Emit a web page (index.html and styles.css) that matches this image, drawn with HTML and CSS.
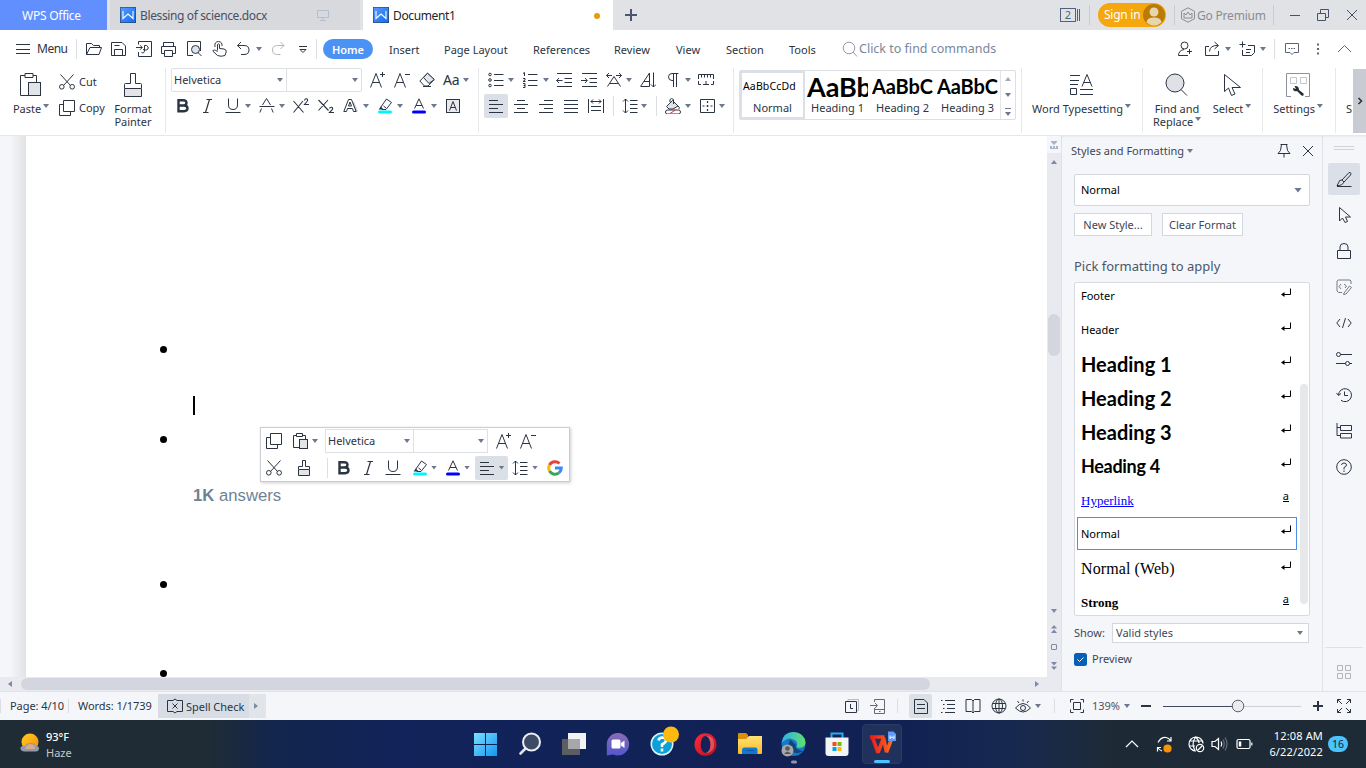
FILE: index.html
```html
<!DOCTYPE html>
<html lang="en">
<head>
<meta charset="utf-8">
<title>Document1 - WPS Office</title>
<link rel="stylesheet" href="styles.css">
</head>
<body>
<svg class="defs" aria-hidden="true">
<defs>
<linearGradient id="gw" x1="0" y1="0" x2="1" y2="1"><stop offset="0" stop-color="#5a9bff"/><stop offset="1" stop-color="#0f6df0"/></linearGradient>
<linearGradient id="gwin" x1="0" y1="0" x2="1" y2="1"><stop offset="0" stop-color="#7be0fb"/><stop offset="1" stop-color="#1297f3"/></linearGradient>
<linearGradient id="gsun" x1="0" y1="0" x2="1" y2="1"><stop offset="0" stop-color="#ffd21c"/><stop offset="1" stop-color="#f58a0c"/></linearGradient>
<linearGradient id="gchat" x1="0" y1="0" x2="0" y2="1"><stop offset="0" stop-color="#8a6bb5"/><stop offset="1" stop-color="#5257cf"/></linearGradient>
<linearGradient id="gop" x1="0" y1="0" x2="1" y2="1"><stop offset="0" stop-color="#ff2b3c"/><stop offset="1" stop-color="#b8101f"/></linearGradient>
<linearGradient id="gfold" x1="0" y1="0" x2="0" y2="1"><stop offset="0" stop-color="#ffe07a"/><stop offset="1" stop-color="#fbbd1e"/></linearGradient>
<linearGradient id="gedge" x1="0" y1="0" x2="1" y2="0"><stop offset="0" stop-color="#2fb0ec"/><stop offset="1" stop-color="#5fe06a"/></linearGradient>
<linearGradient id="gwps" x1="0" y1="0" x2="1" y2="0"><stop offset="0" stop-color="#e8191c"/><stop offset="1" stop-color="#ff6a1c"/></linearGradient>
<symbol id="doc" viewBox="0 0 16 16"><rect width="16" height="16" rx="1" fill="url(#gw)"/><path d="M3 4V11.500L8 7L13 11.500V4" fill="none" stroke="#fff" stroke-width="1.100"/></symbol>
<symbol id="open" viewBox="0 0 16 16"><path d="M.5 13.500V2.500H5.500L7.500 4.500H13.500V6.500M.5 13.500L4 6.500H15.500L13 13.500Z"/></symbol>
<symbol id="save" viewBox="0 0 16 16"><path d="M.5 14.500V1.500H11L14.500 5V14.500Z M3.500 14.500V8.500H11.500V14.500M3.500 4.500H8.500"/></symbol>
<symbol id="export" viewBox="0 0 16 16"><path d="M2.500 3.500V.5H15.500V15.500H2.500V11M0 6.500H6M4 4.200L6.300 6.500L4 8.800"/><path d="M8.500 4.500H10.500Q13 5.500 12 8Q10.500 10 7 8.500M8.500 4.500V9Q8.500 13 5.500 11.500"/></symbol>
<symbol id="print" viewBox="0 0 16 16"><path d="M2.500 5V1.500H12.500V5M3.500 12.500H.5V5.500H14.500V12.500H12M3.500 9.500H11.500V15.500H3.500Z"/></symbol>
<symbol id="preview" viewBox="0 0 16 16"><path d="M6 14.500H.5V.5H13.500V10"/><circle cx="8.500" cy="8.500" r="4" fill="#dfe4ec"/><path d="M11 11.500L14.500 15"/></symbol>
<symbol id="hand" viewBox="0 0 16 16"><path d="M5.500 9.500V3.500Q6.500 2.300 7.500 3.500V7.500L12 8Q14.500 8.500 14.200 11L13 14.500Q9 16 5.500 14.500L.8 10Q1.500 7.800 5.500 10.500M3 6Q2 .8 6.500 .5Q10.500 1 10 5"/></symbol>
<symbol id="undo" viewBox="0 0 16 16"><path d="M6 1L2.500 4.500L6 8M2.500 4.500H9Q14 4.500 14 9Q14 13.500 9 13.500H6"/></symbol>
<symbol id="redo" viewBox="0 0 16 16"><path d="M10.500 1L14 4.500L10.500 8M14 4.500H7.500Q2.500 4.500 2.500 9Q2.500 13.500 7.500 13.500H10.500"/></symbol>
<symbol id="find" viewBox="0 0 16 16"><circle cx="7" cy="7" r="5.800"/><path d="M11 11L15 15.500"/></symbol>
<symbol id="copy" viewBox="0 0 16 16"><path d="M4.500 .5H15.500V11.500H4.500ZM4.500 4.500H.5V15.500H11.500V11.500"/></symbol>
<symbol id="paste" viewBox="0 0 22 24"><path d="M8 22.500H.5V2.500H5M13 2.500H16.500V9"/><path d="M5 .5H13V4.500H5Z"/><rect x="8.500" y="9.500" width="12" height="13" fill="#e2e4e8"/></symbol>
<symbol id="paste-s" viewBox="0 0 16 16"><path d="M6 14.500H.5V2.500H3.500M9.500 2.500H12.500V6M3.500 .5H9.500V3.500H3.500Z"/><rect x="6.500" y="6.500" width="8" height="9" fill="#e2e4e8"/></symbol>
<symbol id="cut" viewBox="0 0 16 16"><circle cx="2.800" cy="12.800" r="2.300"/><circle cx="13.200" cy="12.800" r="2.300"/><path d="M1.500 .5L11.500 11.500M14.500 .5L4.500 11.500"/></symbol>
<symbol id="painter" viewBox="0 0 18 24"><path d="M.5 15V11.500Q.5 10.500 1.500 10.500H6.500V.5H11.500V10.500H16.500Q17.500 10.500 17.500 11.500V15"/><path d="M.5 15.500H17.500V23.500H.5Z" fill="#e2e4e8"/></symbol>
<symbol id="painter-s" viewBox="0 0 16 16"><path d="M2.500 9V6.500H6.500V.5H9.500V6.500H13.500V9"/><path d="M2.500 9.500H13.500V15.500H2.500Z" fill="#e2e4e8"/></symbol>
<symbol id="grow" viewBox="0 0 16 16"><path d="M.5 15.500L6 1.500L11.500 15.500M2.500 10.500H9.500M12.500 0V5M10 2.500H15"/></symbol>
<symbol id="shrink" viewBox="0 0 16 16"><path d="M.5 15.500L6 1.500L11.500 15.500M2.500 10.500H9.500M11 2.500H16"/></symbol>
<symbol id="eraser" viewBox="0 0 16 16"><path d="M.8 9L8.500 1.200L15.200 7.500L9 14H5.500Z"/><path d="M4.500 5.500L10 11.500L15.200 7.500L8.500 1.200Z" fill="#e2e4e8"/><path d="M4 14.500H12"/></symbol>
<symbol id="bold" viewBox="0 0 16 16"><path d="M3.500 2.200H8Q11.500 2.200 11.500 4.800Q11.500 7.500 8 7.500H3.500ZM3.500 7.500H9Q12.500 7.500 12.500 10.300Q12.500 13.200 9 13.200H3.500Z" stroke-width="2.400"/></symbol>
<symbol id="italic" viewBox="0 0 16 16"><path d="M6.500 1.500H12M3 14.500H8.500M9.500 1.500L5.500 14.500" stroke-width="1.200"/></symbol>
<symbol id="under" viewBox="0 0 16 16"><path d="M3.500 .5V7Q3.500 11.500 8 11.500Q12.500 11.500 12.500 7V.5M.5 14.500H15.500"/></symbol>
<symbol id="strike" viewBox="0 0 16 16"><path d="M3.500 7L7.500 .5L11.500 7M.5 8.500H15.500M2.500 10.500L.8 14.500M12.500 10.500L14.200 14.500"/></symbol>
<symbol id="sup" viewBox="0 0 16 16"><path d="M.5 3L10.500 14.500M10 3L.5 14.500M11.500 2.500Q12 .5 13.500 .8Q15.500 1.500 14 3.500L11.500 6.500H16" stroke-width="1.100"/></symbol>
<symbol id="sub" viewBox="0 0 16 16"><path d="M.5 2L10.500 12.500M10 2L.5 12.500M11.500 10.500Q12 9 13.500 9.300Q15.500 10 14 12L11.500 14.500H16" stroke-width="1.100"/></symbol>
<symbol id="outl" viewBox="0 0 16 16"><path d="M10 4L14 13.500" stroke="#d5d9e0" stroke-width="2.500"/><path d="M.8 13.500L5.500 1.500H8.500L13.200 13.500H10.500L9.500 10.500H4.500L3.500 13.500ZM5.500 8L7 4L8.500 8Z"/></symbol>
<symbol id="hl" viewBox="0 0 16 16"><path d="M3.500 9.500L9.500 1L14.500 4.500L9 11.500H5Z"/><path d="M6.500 8L9 10" /><path d="M1.500 11.500L4 8.500L6.500 11.500Z" fill="#2b3442" stroke="none"/><rect x="1" y="12.500" width="14" height="3" rx="1.500" fill="#00f6ff" stroke="none"/></symbol>
<symbol id="fc" viewBox="0 0 16 16"><path d="M3.500 10.500L8 .8L12.500 10.500M5 7.500H11"/><rect x="1" y="12.500" width="14" height="3" rx="1.500" fill="#00f" stroke="none"/></symbol>
<symbol id="abox" viewBox="0 0 16 16"><rect x="1.500" y="1.500" width="13" height="13" fill="#e8eaee"/><path d="M4.500 12.500L8 3.500L11.500 12.500M5.800 9.500H10.200"/></symbol>
<symbol id="bul" viewBox="0 0 16 16"><circle cx="2" cy="2.500" r="1.300"/><circle cx="2" cy="8" r="1.300"/><circle cx="2" cy="13.500" r="1.300"/><path d="M6 2.500H15.500M6 8.500H15.500M6 13.500H15.500"/></symbol>
<symbol id="num" viewBox="0 0 16 16"><path d="M1 1.500L2.500 .5V4M1 6.500H3V8L1 9.500H3.500M1 11.500H3V15.500H1M1.500 13.500H3M6 2.500H15.500M6 8.500H15.500M6 13.500H15.500"/></symbol>
<symbol id="outd" viewBox="0 0 16 16"><path d="M1 1.500H16M8.500 6.500H16M8.500 10.500H16M1 14.500H16M.5 8.500H6.500M3 6L.7 8.500L3 11"/></symbol>
<symbol id="ind" viewBox="0 0 16 16"><path d="M1 1.500H16M8.500 6.500H16M8.500 10.500H16M1 14.500H16M0 8.500H6M4 6L6.300 8.500L4 11"/></symbol>
<symbol id="dir" viewBox="0 0 16 16"><path d="M.5 3.500H6M3 1L.5 3.500L3 6M10 3.500H15.500M13 1L15.500 3.500L13 6M1.500 14.500L8 4.500L14.500 14.500M4 11.500H12"/></symbol>
<symbol id="sort" viewBox="0 0 16 16"><path d="M13.500 .5V15M11 12.500L13.500 15L16 12.500M.5 14.500H9.500V1L.8 14M4 9.500H9.500"/></symbol>
<symbol id="pil" viewBox="0 0 16 16"><path d="M12.500 1.500H6Q2.500 1.500 2.500 4.800Q2.500 8.500 6 8.500H7.500V15M7.500 1.500V9M10.500 1.500V15"/></symbol>
<symbol id="ruler" viewBox="0 0 16 16"><path d="M.5 7V2.500H15.500V7M3.500 2.500V5.500M6.500 2.500V5.500M9.500 2.500V5.500M12.500 2.500V5.500M.5 9V12.500H3M5 12.500H11M13 12.500H15.500V9M8 9V12.500"/></symbol>
<symbol id="al" viewBox="0 0 16 16"><path d="M1 2.500H10M1 6.500H15M1 10.500H10M1 14.500H15"/></symbol>
<symbol id="ac" viewBox="0 0 16 16"><path d="M4 2.500H12M1 6.500H15M4 10.500H12M1 14.500H15"/></symbol>
<symbol id="ar" viewBox="0 0 16 16"><path d="M6 2.500H15M1 6.500H15M6 10.500H15M1 14.500H15"/></symbol>
<symbol id="aj" viewBox="0 0 16 16"><path d="M1 2.500H15M1 6.500H15M1 10.500H15M1 14.500H15"/></symbol>
<symbol id="dist" viewBox="0 0 16 16"><path d="M.5 1V15M15.500 1V15M3 3.500H13M5 1.500L3 3.500L5 5.500M11 1.500L13 3.500L11 5.500M3 8.500H13M3 12.500H13"/></symbol>
<symbol id="space" viewBox="0 0 16 16"><path d="M3.500 1V15M1 3.500L3.500 1L6 3.500M1 12.500L3.500 15L6 12.500M8 2.500H15.500M8 6.500H15.500M8 10.500H15.500M8 14.500H15.500"/></symbol>
<symbol id="fill" viewBox="0 0 16 16"><path d="M1.500 8.500L7.500 2.500L13 8L8 11H4Z" fill="#e2e4e8"/><path d="M5 4V1.500Q6.500 -.5 8.500 1.500V6M13 8Q15 9 14 11"/><rect x=".5" y="12" width="15" height="4" rx="2" fill="#fff"/><path d="M5 15.500L10.500 12" stroke="#e33"/></symbol>
<symbol id="border" viewBox="0 0 16 16"><path d="M1.500 1.500H15.500V14.500H1.500Z"/><path d="M3.500 8H13.500M8.500 3V13" stroke-dasharray="2 2" stroke-width="1.200"/></symbol>
<symbol id="typeset" viewBox="0 0 24 24"><path d="M0 2.500H10M0 7.500H9M0 11.500H8M.5 15.500H6.500V21.500H.5ZM10 16.500H23M10 21.500H23M12 13.500L17 1.500L22 13.500M13.500 9.500H20.500"/></symbol>
<symbol id="bigfind" viewBox="0 0 24 24"><circle cx="10" cy="10" r="9" fill="#dfe1e6"/><path d="M16 16.500L22 22.500"/></symbol>
<symbol id="cursor" viewBox="0 0 24 24"><path d="M4.500 1.500V18.500L8.500 15L11.500 22.500L15 21L12 14.500H20.500Z"/></symbol>
<symbol id="settings" viewBox="0 0 24 24"><path d="M5 23.500H.5V.5H23.500V23.500H19" stroke="#8c919a"/><path d="M4.500 4.500H10.500V10.500H4.500ZM14.500 4.500H20.500V10.500H14.500Z" stroke="#c3c6cc"/><path d="M8.500 13L10 16L7 15Q7 19 11 18L15.500 22.500Q18.500 23.500 17.500 20.500L13 17Q13 12.500 8.500 13Z" fill="#252d38" stroke="none"/></symbol>
<symbol id="person" viewBox="0 0 16 16"><circle cx="7.500" cy="4.500" r="3.500"/><path d="M7 8.500Q1.500 9.500 1.500 14.500H11M12.500 8V13M10 10.500H15"/></symbol>
<symbol id="share" viewBox="0 0 16 16"><path d="M10.500 1L14.500 4.500L10.500 8M14 4.500Q6 4 5.500 10.500M5 5.500H1.500V14.500H14.500V10"/></symbol>
<symbol id="note" viewBox="0 0 16 16"><path d="M3.500 .5V6.500M.5 3.500H6.500M9 4.500H15.500V11.500L12.500 14.500H3.500V9M7 8.500H12M7 11.500H11"/></symbol>
<symbol id="bubble" viewBox="0 0 16 16"><path d="M1.500 2.500H14.500V11.500H10L8 13.500L6 11.500H1.500Z"/><path d="M4.500 7.500H11.500" stroke-dasharray="1.500 1"/></symbol>
<symbol id="pin" viewBox="0 0 16 16"><path d="M4.500 1.500H11.500M5.500 1.500L4.500 7.500L2 10.500H14L11.500 7.500L10.500 1.500M8 10.500V14.500"/></symbol>
<symbol id="x" viewBox="0 0 16 16"><path d="M3 3L13 13M13 3L3 13"/></symbol>
<symbol id="brush" viewBox="0 0 16 16"><path d="M6 9L13 1.500Q16 1.500 14.500 4L8 11ZM6 9Q3 8.500 2.500 12L1 14.500Q6 15 8 11M1 15.500H15.500"/></symbol>
<symbol id="ptr" viewBox="0 0 16 16"><path d="M3.500 .5V14L6.500 11L9 15.500L11.500 14.500L9.500 10H14.500Z"/></symbol>
<symbol id="lock" viewBox="0 0 16 16"><path d="M1.500 7.500H14.500V15.500H1.500ZM4 7.500V4Q4 .5 8 .5Q12 .5 12 4V7.500"/></symbol>
<symbol id="codeedit" viewBox="0 0 16 16"><path d="M6 13.500H2.500L1 12V2L2.500 1H14L15 2V5M5 5L3 7.500L5 10M8 5L10.500 7L9 9M8 14L13.500 7L15.500 8.500L10 15L7.500 15.500Z"/></symbol>
<symbol id="code" viewBox="0 0 16 16"><path d="M4 4L.8 8L4 12M12 4L15.200 8L12 12M9.500 3L6.500 13"/></symbol>
<symbol id="sliders" viewBox="0 0 16 16"><circle cx="2.500" cy="3.500" r="2"/><circle cx="11.500" cy="12.500" r="2"/><path d="M4.500 3.500H16M0 12.500H9.500M13.500 12.500H16"/></symbol>
<symbol id="hist" viewBox="0 0 16 16"><path d="M2.500 8A6.500 6.500 0 1 1 5 13.300M.5 6L2.500 8.500L5 6.500M8.500 4.500V8.500H12"/></symbol>
<symbol id="tree" viewBox="0 0 16 16"><path d="M1 0V12.500H4.500M1 4.500H4.500M4.500 2.500H15.500V7.500H4.500ZM4.500 10.500H15.500V15H4.500Z"/></symbol>
<symbol id="help" viewBox="0 0 16 16"><circle cx="8" cy="8" r="7.300"/><path d="M5.500 6Q5.500 4 8 4Q10.500 4 10.500 6Q10.500 7.500 8 8.500V10.500M8 11.500V13"/></symbol>
<symbol id="four" viewBox="0 0 16 16"><path d="M1.500 1.500H6.500V6.500H1.500ZM9.500 1.500H14.500V6.500H9.500ZM1.500 9.500H6.500V14.500H1.500ZM9.500 9.500H14.500V14.500H9.500Z"/></symbol>
<symbol id="ret" viewBox="0 0 10 10"><path d="M9.500 .5V6.500H1"/><path d="M0 6.500L3.500 4V9Z" fill="#000" stroke="none"/></symbol>
<symbol id="up" viewBox="0 0 8 8"><path d="M1 6L4 2L7 6Z" fill="#7d8aa5" stroke="none"/></symbol>
<symbol id="spell" viewBox="0 0 16 16"><path d="M6 2.500H.5V13.500H6L8 15L10 13.500H15.500V2.500H10L8 1L6 2.500M5.500 5.500L10.500 10.500M10.500 5.500L5.500 10.500"/></symbol>
<symbol id="clock" viewBox="0 0 16 16"><path d="M4 3V1.500H14.500V12.500H13" stroke="#b5bac4"/><path d="M1.500 3.500H12.500V14.500H1.500ZM6.500 6V10.500H9"/></symbol>
<symbol id="phone" viewBox="0 0 16 16"><path d="M4.500 4V1.500H14.500V15.500H4.500V10M4.500 11.500H14.500M0 7.500H7M5 5L7.500 7.500L5 10M9 13.500H10.500" stroke="#646a75"/></symbol>
<symbol id="page" viewBox="0 0 16 16"><path d="M1.500 1.500H11L14.500 5V15.500H1.500ZM4 6.500H12M4 10.500H12"/></symbol>
<symbol id="outline" viewBox="0 0 16 16"><path d="M1 2.500H2.500M5 2.500H15M3 6.500H4.500M7 6.500H15M3 10.500H4.500M7 10.500H15M1 14.500H2.500M5 14.500H15"/></symbol>
<symbol id="book" viewBox="0 0 16 16"><path d="M1 1.500H6.500L8 3L9.500 1.500H15V13.500H9.500L8 15L6.500 13.500H1ZM8 3V15"/></symbol>
<symbol id="globe" viewBox="0 0 16 16"><circle cx="8" cy="8" r="7"/><ellipse cx="8" cy="8" rx="3.500" ry="7"/><path d="M1.500 5.500H14.500M1.500 10.500H14.500M8 1V15"/></symbol>
<symbol id="eye" viewBox="0 0 16 16"><path d="M.5 10Q8 1 15.500 10Q8 18 .5 10Z"/><circle cx="8" cy="10" r="2.500"/><path d="M8 1.500V3.500M2.500 3L4 5M13.500 3L12 5"/></symbol>
<symbol id="fit" viewBox="0 0 16 16"><path d="M4.500 4.500H11.500V11.500H4.500ZM1.500 4.500V1.500H4.500M11.500 1.500H14.500V4.500M14.500 11.500V14.500H11.500M4.500 14.500H1.500V11.500"/></symbol>
<symbol id="full" viewBox="0 0 16 16"><path d="M6 6L1.500 1.500M1.500 5V1.500H5M10 6L14.500 1.500M11 1.500H14.500V5M6 10L1.500 14.500M1.500 11V14.500H5M10 10L14.500 14.500M14.500 11V14.500H11"/></symbol>
<symbol id="google" viewBox="0 0 16 16"><g fill="none" stroke-width="3"><path d="M2.500 5A6.300 6.300 0 0 1 12.500 3.500" stroke="#ea4335"/><path d="M2.500 5A6.300 6.300 0 0 0 2.500 11" stroke="#fbbc05"/><path d="M2.500 11A6.300 6.300 0 0 0 12 12.900" stroke="#34a853"/><path d="M12 12.900Q14.300 11 14.300 8H8" stroke="#4285f4"/></g></symbol>
</defs>
</svg>

<div class="app">
<header class="tabs">
  <div class="office">WPS Office</div>
  <div class="tab"><svg class="i"><use href="#doc"/></svg><span class="t12">Blessing of science.docx</span>
    <svg class="i mon" viewBox="0 0 16 16"><path d="M2.500 3.500H13.500V10.500H2.500ZM8 10.500V13.500M5 13.500H11"/></svg></div>
  <div class="tab on"><svg class="i"><use href="#doc"/></svg><span class="t12">Document1</span><i class="dirty"></i></div>
  <svg class="i plus" viewBox="0 0 16 16"><path d="M8 2V14M2 8H14"/></svg>
  <div class="wincount"><b>2</b><i></i><i></i></div>
  <i class="vs"></i>
  <div class="signin"><span>Sign in</span><svg width="22" height="22" viewBox="0 0 22 22"><circle cx="11" cy="11" r="11" fill="#b97a06"/><circle cx="11" cy="8" r="4.500" fill="#e8d5ac"/><path d="M3.500 18.500Q4 13.500 11 13.500Q18 13.500 18.500 18.500Q11 25 3.500 18.500Z" fill="#e8d5ac"/></svg></div>
  <i class="vs s2"></i>
  <svg class="i crown" viewBox="0 0 16 16"><path d="M8 .8L14.500 4.300V11.700L8 15.200L1.500 11.700V4.300ZM4 6L6 8L8 5L10 8L12 6V11H4Z"/></svg><span class="prem">Go Premium</span>
  <i class="vs s3"></i>
  <svg class="i w1" viewBox="0 0 16 16"><path d="M3 8.500H13"/></svg>
  <svg class="i w2" viewBox="0 0 16 16"><path d="M2.500 6.500H10.500V13.500H2.500ZM5.500 6V2.500H13.500V10.500H11"/></svg>
  <svg class="i w3"><use href="#x"/></svg>
</header>

<nav class="menu">
  <svg class="i" viewBox="0 0 16 16"><path d="M0 3.500H14M0 8.500H14M0 12.500H14"/></svg><span class="t12 mn">Menu</span><i class="vs"></i>
  <svg class="i"><use href="#open"/></svg><svg class="i"><use href="#save"/></svg><svg class="i"><use href="#export"/></svg><svg class="i"><use href="#print"/></svg><svg class="i"><use href="#preview"/></svg><svg class="i"><use href="#hand"/></svg><svg class="i"><use href="#undo"/></svg><i class="dd"></i><svg class="i faint"><use href="#redo"/></svg>
  <svg class="i" viewBox="0 0 16 16"><path d="M0 5.500H8M1 8.500H7L4 11.500Z"/></svg><i class="vs"></i>
  <span class="home">Home</span><span>Insert</span><span>Page Layout</span><span>References</span><span>Review</span><span>View</span><span>Section</span><span>Tools</span>
  <svg class="i gray"><use href="#find"/></svg><span class="ask">Click to find commands</span>
  <svg class="i"><use href="#person"/></svg><svg class="i"><use href="#share"/></svg><i class="dd"></i><svg class="i"><use href="#note"/></svg><i class="dd"></i><i class="vs"></i><svg class="i gray2"><use href="#bubble"/></svg>
  <svg class="i gray2" viewBox="0 0 16 16"><path d="M2 2.500V13.500" stroke-width="2" stroke-dasharray="2 2.500"/></svg>
  <svg class="i gray2" viewBox="0 0 16 16"><path d="M1 11L7.500 4.500L14 11"/></svg>
</nav>

<section class="ribbon">
  <div class="grp clip">
    <div class="big paste"><svg width="22" height="24"><use href="#paste"/></svg><span>Paste <i class="dd"></i></span></div>
    <div class="pair"><span><svg class="i"><use href="#cut"/></svg>Cut</span><span><svg class="i"><use href="#copy"/></svg>Copy</span></div>
    <div class="big fp"><svg width="18" height="24"><use href="#painter"/></svg><span>Format<br>Painter</span></div>
  </div>
  <div class="grp font">
    <div class="r1"><div class="combo"><span>Helvetica<i class="dd"></i></span><span><i class="dd"></i></span></div>
      <svg class="i"><use href="#grow"/></svg><svg class="i"><use href="#shrink"/></svg><svg class="i"><use href="#eraser"/></svg><span class="aa">Aa</span><i class="dd"></i></div>
    <div class="r2"><svg class="i"><use href="#bold"/></svg><svg class="i"><use href="#italic"/></svg><svg class="i"><use href="#under"/></svg><i class="dd"></i><svg class="i"><use href="#strike"/></svg><i class="dd"></i><svg class="i"><use href="#sup"/></svg><svg class="i"><use href="#sub"/></svg><svg class="i"><use href="#outl"/></svg><i class="dd"></i><svg class="i"><use href="#hl"/></svg><i class="dd"></i><svg class="i"><use href="#fc"/></svg><i class="dd"></i><svg class="i"><use href="#abox"/></svg></div>
  </div>
  <div class="grp para">
    <div class="r1"><svg class="i"><use href="#bul"/></svg><i class="dd"></i><svg class="i"><use href="#num"/></svg><i class="dd"></i><svg class="i"><use href="#outd"/></svg><svg class="i"><use href="#ind"/></svg><svg class="i"><use href="#dir"/></svg><i class="dd"></i><svg class="i"><use href="#sort"/></svg><svg class="i"><use href="#pil"/></svg><i class="dd"></i><svg class="i"><use href="#ruler"/></svg></div>
    <div class="r2"><span class="hot"><svg class="i"><use href="#al"/></svg></span><svg class="i"><use href="#ac"/></svg><svg class="i"><use href="#ar"/></svg><svg class="i"><use href="#aj"/></svg><svg class="i"><use href="#dist"/></svg><i class="vs"></i><svg class="i"><use href="#space"/></svg><i class="dd"></i><i class="vs"></i><svg class="i"><use href="#fill"/></svg><i class="dd"></i><svg class="i"><use href="#border"/></svg><i class="dd"></i></div>
  </div>
  <div class="grp gal">
    <div class="gallery">
      <div class="st sel"><b class="n">AaBbCcDd</b><span>Normal</span></div>
      <div class="st"><b class="h1">AaBb</b><span>Heading 1</span></div>
      <div class="st"><b>AaBbCc</b><span>Heading 2</span></div>
      <div class="st"><b>AaBbCc</b><span>Heading 3</span></div>
      <div class="gs"><i class="dd flip"></i><i class="dd"></i><span><i class="bar"></i><i class="dd"></i></span></div>
    </div>
  </div>
  <div class="grp type"><div class="big"><svg width="24" height="24"><use href="#typeset"/></svg><span>Word Typesetting <i class="dd"></i></span></div></div>
  <div class="grp sel2">
    <div class="big fr"><svg width="24" height="24"><use href="#bigfind"/></svg><span>Find and<br>Replace <i class="dd"></i></span></div>
    <div class="big se"><svg width="24" height="24"><use href="#cursor"/></svg><span>Select <i class="dd"></i></span></div>
  </div>
  <div class="grp sett"><div class="big"><svg width="24" height="24"><use href="#settings"/></svg><span>Settings <i class="dd"></i></span></div></div>
  <span class="cut-s">S</span>
  <div class="more"><svg class="i" viewBox="0 0 16 16"><path d="M6.500 5L9.500 8L6.500 11" stroke-width="1.600"/></svg></div>
</section>

<main class="work">
  <div class="docarea">
    <div class="canvas"><div class="gutter"></div>
      <div class="sheet"><i class="pt a"></i><i class="caret"></i><i class="pt b"></i><p><b>1K</b> answers</p><i class="pt c"></i><i class="pt d"></i></div>
      <div class="vbar">
        <div class="vtop"><svg width="10" height="12" viewBox="0 0 10 12"><path d="M2 2H8V3L5 6L2 3ZM1 9V7H3V9H4V7H6V9H7V7H9V9V10H1Z" fill="#a9b3cb"/></svg></div>
        <svg class="up" width="8" height="8"><use href="#up"/></svg><i class="thumb"></i>
        <div class="vbtn"><svg class="flip" width="8" height="8"><use href="#up"/></svg><svg width="8" height="10" viewBox="0 0 8 10"><path d="M1 4.500L4 1L7 4.500ZM1 9L4 5.500L7 9Z" fill="#7d8aa5"/></svg><i class="sq"></i><svg class="flip" width="8" height="10" viewBox="0 0 8 10"><path d="M1 4.500L4 1L7 4.500ZM1 9L4 5.500L7 9Z" fill="#7d8aa5"/></svg></div>
      </div>
    </div>
    <div class="hbar"><svg class="lft" width="8" height="8"><use href="#up"/></svg><i></i><svg class="rgt" width="8" height="8"><use href="#up"/></svg></div>
    <div class="float">
      <div class="f1"><svg class="i"><use href="#copy"/></svg><svg class="i"><use href="#paste-s"/></svg><i class="dd"></i><div class="combo"><span>Helvetica<i class="dd"></i></span><span><i class="dd"></i></span></div><svg class="i"><use href="#grow"/></svg><svg class="i"><use href="#shrink"/></svg></div>
      <div class="f2"><svg class="i"><use href="#cut"/></svg><svg class="i"><use href="#painter-s"/></svg><i class="vs"></i><svg class="i"><use href="#bold"/></svg><svg class="i"><use href="#italic"/></svg><svg class="i"><use href="#under"/></svg><svg class="i"><use href="#hl"/></svg><i class="dd"></i><svg class="i"><use href="#fc"/></svg><i class="dd"></i><span class="hot"><svg class="i"><use href="#al"/></svg><i class="dd"></i></span><svg class="i"><use href="#space"/></svg><i class="dd"></i><svg class="i g"><use href="#google"/></svg></div>
    </div>
  </div>

  <aside class="panel">
    <div class="ph"><span>Styles and Formatting</span><i class="dd"></i><svg class="i"><use href="#pin"/></svg><svg class="i"><use href="#x"/></svg></div>
    <div class="cur">Normal<i class="dd"></i></div>
    <div class="btns"><span>New Style...</span><span>Clear Format</span></div>
    <h2>Pick formatting to apply</h2>
    <div class="list">
      <ul>
        <li>Footer<svg><use href="#ret"/></svg></li>
        <li>Header<svg><use href="#ret"/></svg></li>
        <li class="h">Heading 1<svg><use href="#ret"/></svg></li>
        <li class="h h2">Heading 2<svg><use href="#ret"/></svg></li>
        <li class="h h2">Heading 3<svg><use href="#ret"/></svg></li>
        <li class="h h4">Heading 4<svg><use href="#ret"/></svg></li>
        <li class="link"><u>Hyperlink</u><em>a</em></li>
        <li class="cursel">Normal<svg><use href="#ret"/></svg></li>
        <li class="web">Normal (Web)<svg><use href="#ret"/></svg></li>
        <li class="strong">Strong<em>a</em></li>
      </ul>
      <i class="lthumb"></i>
    </div>
    <div class="show"><span>Show:</span><div>Valid styles<i class="dd"></i></div></div>
    <div class="prev"><svg width="13" height="13" viewBox="0 0 13 13"><rect width="13" height="13" rx="2.500" fill="#0560b6"/><path d="M3.500 6.500L5.500 8.500L9.500 4.500" fill="none" stroke="#fff"/></svg>Preview</div>
  </aside>

  <aside class="side">
    <i class="grip"></i>
    <div class="on"><svg class="i"><use href="#brush"/></svg></div><div><svg class="i"><use href="#ptr"/></svg></div><div><svg class="i"><use href="#lock"/></svg></div><div class="dim"><svg class="i"><use href="#codeedit"/></svg></div><div><svg class="i"><use href="#code"/></svg></div><div><svg class="i"><use href="#sliders"/></svg></div><div><svg class="i"><use href="#hist"/></svg></div><div><svg class="i"><use href="#tree"/></svg></div><div><svg class="i"><use href="#help"/></svg></div>
    <footer><svg class="i"><use href="#four"/></svg></footer>
  </aside>
</main>

<footer class="status">
  <i class="vs"></i><span>Page: 4/10</span><i class="vs"></i><span>Words: 1/1739</span>
  <div class="spell"><svg class="i"><use href="#spell"/></svg><span>Spell Check</span></div><div class="sarr"><svg class="rgt" width="8" height="8"><use href="#up"/></svg></div>
  <svg class="i"><use href="#clock"/></svg><svg class="i"><use href="#phone"/></svg><i class="vs"></i><span class="hot"><svg class="i"><use href="#page"/></svg></span><svg class="i"><use href="#outline"/></svg><svg class="i"><use href="#book"/></svg><svg class="i"><use href="#globe"/></svg><svg class="i"><use href="#eye"/></svg><i class="dd"></i><i class="vs"></i><svg class="i"><use href="#fit"/></svg><span class="zoomv">139%</span><i class="dd"></i>
  <svg class="i" viewBox="0 0 16 16"><path d="M0 8H10" stroke-width="2"/></svg>
  <svg class="sl" width="138" height="14" viewBox="0 0 138 14"><path d="M0 7.500H70" stroke="#3d4a63"/><path d="M80 7.500H138" stroke="#ccd0d8"/><circle cx="75" cy="7" r="5.800" fill="#e9ebee" stroke="#5c6370"/></svg>
  <svg class="i" viewBox="0 0 16 16"><path d="M0 8H10M5 3V13" stroke-width="2"/></svg><svg class="i"><use href="#full"/></svg>
</footer>

<footer class="task">
  <svg width="20" height="20" viewBox="0 0 20 20"><circle cx="10" cy="9" r="8.500" fill="url(#gsun)"/><path d="M4 18.500Q0 18 .5 14.500Q2 12 5 13Q7 9.500 11 10Q14.500 10 15.500 12.500Q19.500 13 19 16Q18.500 18.500 16 18.500Z" fill="#8e9bab"/><path d="M5 16Q7 10.500 11 11Q15 11.500 15 16Z" fill="#dda98a"/></svg>
  <div class="wx"><b>93°F</b><span>Haze</span></div>
  <svg width="23" height="23" viewBox="0 0 23 23"><path d="M0 0H11V11H0ZM12 0H23V11H12ZM0 12H11V23H0ZM12 12H23V23H12Z" fill="url(#gwin)"/></svg>
  <svg width="23" height="24" viewBox="0 0 23 24"><path d="M7.500 15.500L1.500 21.500" stroke="#e0e2e4" stroke-width="2.600" stroke-linecap="round"/><circle cx="12.500" cy="10" r="8.500" fill="#3d4c66" stroke="#eceef0" stroke-width="2"/></svg>
  <svg width="24" height="24" viewBox="0 0 24 24"><path d="M0 7H18V23H0Z" fill="#5b5d61"/><path d="M6 1H24V17H6Z" fill="#f1f2f4"/><path d="M6 7H18V17H6Z" fill="#a5a7aa"/></svg>
  <svg width="24" height="24" viewBox="0 0 24 24"><path d="M12 1A11.300 11.300 0 1 1 7 22.500L.8 23.500V12A11.300 11.300 0 0 1 12 1Z" fill="url(#gchat)"/><rect x="5.500" y="7.500" width="9" height="9" rx="1.500" fill="#fff"/><path d="M15 11L18.500 8.500V16L15 13.500Z" fill="#fff"/></svg>
  <svg width="30" height="30" viewBox="0 0 30 30"><circle cx="12" cy="18" r="11.500" fill="#dff3fb"/><circle cx="12" cy="18" r="10" fill="#0ba0d8"/><path d="M8.500 14.500Q9 11.500 12.500 11.500Q16 11.800 16 14.500Q16 16.500 12 18.500V21M12 22.500V25.500" fill="none" stroke="#fff" stroke-width="2.600"/><circle cx="21" cy="8.500" r="8" fill="#fcb90f"/></svg>
  <svg width="23" height="23" viewBox="0 0 23 23"><ellipse cx="11.500" cy="11.500" rx="11" ry="11.300" fill="url(#gop)"/><ellipse cx="11.500" cy="11.500" rx="4.800" ry="8.500" fill="#14225a"/><path d="M12 3Q21 2 20 14Q18 20 11.500 20Q16.500 19 16.500 11.500Q16.500 5 12 3Z" fill="#fff" opacity=".25"/></svg>
  <svg width="24" height="24" viewBox="0 0 24 24"><path d="M0 2Q0 1 1 1H8L10 3V8H0Z" fill="#d99108"/><path d="M0 7H8L11 4H24V21Q24 22 23 22H1Q0 22 0 21Z" fill="url(#gfold)"/><path d="M4 22V18Q4 15.500 6 15.500H18Q19.500 15.500 19.500 18V22Z" fill="#1277cf"/><path d="M8 18.500H16" stroke="#0b5aa8"/></svg>
  <svg width="25" height="40" viewBox="0 0 25 40"><circle cx="12.500" cy="20" r="12" fill="#1878c8"/><path d="M.7 19Q2 8 12.500 8Q24 9 24.500 19Q23.500 25 15.500 23.500Q17 20 15 17Q8 11 .7 19Z" fill="url(#gedge)"/><path d="M9 15.500Q5 24 13 28.500Q18 30 22 27Q14 26 14.500 20.500Z" fill="#10457e"/><circle cx="6.500" cy="26.500" r="6" fill="#a9a8a8"/><circle cx="6.500" cy="24.500" r="2.300" fill="#57585c"/><path d="M3 30Q6.500 25 10 30Z" fill="#57585c"/><rect x="10" y="36.500" width="6" height="3" rx="1.500" fill="#8e96a8"/></svg>
  <svg width="24" height="24" viewBox="0 0 24 24"><path d="M6.500 6V1.500H17.500V6" fill="none" stroke="#26aef2" stroke-width="2"/><path d="M.5 5.500H23.500V21Q23.500 24 20.500 24H3.500Q.5 24 .5 21Z" fill="#f3f4f5"/><path d="M7.500 10H11.500V14H7.500Z" fill="#ee4f22"/><path d="M12.500 10H16.500V14H12.500Z" fill="#7eb900"/><path d="M7.500 15H11.500V19H7.500Z" fill="#00a3ee"/><path d="M12.500 15H16.500V19H12.500Z" fill="#fcb606"/></svg>
  <div class="wps"><svg width="40" height="40" viewBox="0 0 40 40"><path d="M8 13H22.500M10 12.500L16 28.500L21.500 14L24.500 28L30 14" fill="none" stroke="url(#gwps)" stroke-width="3.600" stroke-linejoin="bevel"/><path d="M26 7.500H31.500L34 10V17H26Z" fill="#5f9bf7"/><path d="M28 11.500V14.500L30 12.800L32 14.500V11.500" fill="none" stroke="#fff"/><rect x="12" y="36" width="16" height="3" rx="1.500" fill="#4cc2ff"/></svg></div>
  <svg class="wi" viewBox="0 0 16 16"><path d="M2 11L8 5L14 11"/></svg>
  <svg class="wi" viewBox="0 0 16 16"><path d="M2 6.500Q5 1 10 1.500Q13 2 14.500 4.500M15 1V5H11M1.500 15.500V11.500H5M2 12Q3.500 14 6 15"/><circle cx="11.500" cy="12.500" r="3.500" fill="#f8930c" stroke="#f8930c"/></svg>
  <svg class="wi" viewBox="0 0 16 16"><path d="M8 15A7 7 0 1 1 15 7.500M1.500 5H14.500M1.500 10H7M7 14.500Q3 8 7.500 1Q11 4 11 7"/><circle cx="12" cy="12" r="3.700"/><path d="M9.500 14.500L14.500 9.500"/></svg>
  <svg class="wi" viewBox="0 0 16 16"><path d="M1 5.500H4L7.500 2.500V13.500L4 10.500H1Z"/><path d="M10 5.500Q11.500 8 10 10.500"/><path d="M12 3.500Q14.500 8 12 12.500M14 1.500Q18 8 14 14.500" stroke="#65707e"/></svg>
  <svg class="wi" viewBox="0 0 16 16"><rect x="0" y="3.500" width="13" height="9" rx="1.500"/><path d="M3 5.500V10.500" stroke-width="2.500"/><path d="M14.800 6.500V9.500"/></svg>
  <div class="clk"><span>12:08 AM</span><span>6/22/2022</span></div>
  <div class="cnt">16</div>
</footer>
</div>
</body>
</html>
```
FILE: styles.css
```css
* { box-sizing: border-box; }
body { margin: 0; font: 11px/14px "Noto Sans", "Open Sans", sans-serif; color: #2b3442; overflow: hidden; }
i { font-style: normal; display: block; }
svg { display: block; overflow: visible; }
.defs { position: absolute; width: 0; height: 0; }
.i { width: 16px; height: 16px; fill: none; stroke: #2b3442; stroke-width: 1; flex: none; }
.dd { width: 6px; height: 4px; background: #6b788f; clip-path: polygon(0 0, 100% 0, 50% 100%); flex: none; }
.flip { transform: rotate(180deg); }
.lft { transform: rotate(-90deg); }
.rgt { transform: rotate(90deg); }
.vs { width: 1px; height: 20px; background: #dcdee2; }
.t12 { font-size: 12px; white-space: nowrap; }
.app { width: 1366px; height: 768px; display: flex; flex-direction: column; background: #fff; }
.app > * { flex: none; }

/* title tabs */
.tabs { height: 30px; display: flex; align-items: center; background: #e1e2e6; }
.office { width: 107px; height: 30px; line-height: 31px; background: #618ffd; color: #fff; font-size: 12px; letter-spacing: -.25px; padding-left: 22px; margin-right: 3px; }
.tab { width: 250px; height: 30px; display: flex; align-items: center; gap: 4px; padding-left: 10px; background: #d8d9dd; color: #485061; margin-right: 3px; letter-spacing: -.37px; }
.tab .t12 { padding-top: 2px; }
.tab.on { background: #fff; color: #1d2430; margin-right: 0; }
.mon { stroke: #b5bdd3; margin-left: 44px; }
.dirty { width: 6px; height: 6px; border-radius: 50%; background: #e69a05; margin: 1px 0 0 auto; margin-right: 13px; }
.plus { stroke: #4a5670; stroke-width: 2; margin-left: 10px; }
.wincount { margin-left: 421px; display: flex; gap: 1px; align-items: center; }
.wincount b { width: 16px; height: 14px; border: 1px solid #4f6080; font: 11px/12px "Noto Sans", sans-serif; color: #4f6080; text-align: center; }
.wincount i { width: 1px; height: 12px; background: #4f6080; }
.tabs .vs { background: #c9cbd0; margin-left: 9px; }
.signin { width: 68px; height: 24px; margin-left: 8px; border-radius: 12px; background: #f5a70d; color: #fff; display: flex; align-items: center; justify-content: space-between; padding: 0 1px 0 6px; font-size: 12px; letter-spacing: -.25px; }
.tabs .s2 { margin-left: 8px; }
.crown { stroke: #8a8c92; margin-left: 5px; }
.prem { font-size: 12px; color: #8a8c92; margin-left: 1px; padding-top: 2px; width: 70px; white-space: nowrap; letter-spacing: -.45px; }
.tabs .prem { letter-spacing: -.2px; }
.tabs .s3 { margin-left: 6px; }
.w1, .w2, .w3 { stroke: #46526b; }
.w1 { margin-left: 13px; } .w2 { margin-left: 12px; } .w3 { margin-left: 13px; }

/* menu row */
.menu { height: 38px; display: grid; align-items: center; padding-left: 16px; white-space: nowrap;
  grid-template-columns: 21px 39px 10px 25px 25px 25px 26px 25px 23px 21px 14px 29px 17px 7px 66px 55px 89px 81px 62px 50px 63px 53px 17px 318px 27px 21px 14px 21px 14px 10px 32px 21px 20px; }
.mn { letter-spacing: -.5px; }
.menu > span { padding-top: 1px; }
.menu .ask, .menu .mn { padding-top: 0; }
.menu .home { width: 50px; height: 20px; line-height: 20px; border-radius: 10px; background: #4a92f3; color: #fff; font-weight: 600; text-align: center; }
.menu .faint { stroke: #b3b8c0; }
.menu .gray { stroke: #929cb0; }
.menu .gray2 { stroke: #5d6675; }
.ask { font-size: 12.500px; color: #7b869c; }

/* ribbon */
.ribbon { height: 68px; display: flex; border-bottom: 1px solid #e6e7e9; box-shadow: 0 1px 2px #0000000d; white-space: nowrap; position: relative; }
.grp { height: 65px; border-right: 1px solid #e6e8eb; flex: none; }
.big { display: flex; flex-direction: column; align-items: center; padding-top: 5px; line-height: 13px; text-align: center; }
.big .i, .big svg { fill: none; stroke: #2b3442; }
.big span { margin-top: 5px; }
.big .dd { display: inline-block; vertical-align: 5px; margin-left: -1px; }
.clip { width: 166px; display: flex; }
.paste { width: 58px; padding-left: 4px; }
.pair { width: 50px; padding: 6px 0 0 1px; display: flex; flex-direction: column; gap: 10px; }
.pair span { display: flex; align-items: center; gap: 4px; height: 16px; }
.fp { width: 50px; }
.font { width: 313px; }
.r1, .r2 { display: grid; height: 24px; align-items: center; }
.r2 { margin-top: 2px; }
.combo { height: 24px; display: flex; border: 1px solid #dde0e5; border-radius: 2px; background: #fff; }
.combo span { display: flex; align-items: center; justify-content: space-between; padding: 0 3px 0 2px; }
.combo span + span { flex: 1; justify-content: flex-end; border-left: 1px solid #dde0e5; }
.font .r1 { padding-left: 5px; grid-template-columns: 199px 24px 25px 24px 20px 10px; }
.font .combo { width: 191px; }
.font .combo span:first-child { width: 114px; }
.aa { font-size: 14px; letter-spacing: -.2px; }
.font .r2 { padding-left: 9px; grid-template-columns: 25px 25px 20px 14px 20px 14px 25px 25px 20px 14px 20px 14px 20px 14px 16px; }
.para { width: 255px; }
.para .r1 { padding-left: 9px; grid-template-columns: 20px 14px 21px 13px 25px 25px 20px 14px 26px 19px 13px 20px; }
.para .r2 { padding-left: 5px; grid-template-columns: 29px 25px 25px 25px 25px 9px 19px 15px 9px 20px 14px 20px 10px; }
.hot { background: #dbe0e6; height: 24px; width: 24px; display: flex; align-items: center; justify-content: center; border-radius: 2px; }
.gal { width: 288px; padding: 2px 0 0 5px; }
.gallery { width: 277px; height: 50px; border: 1px solid #dcdfe4; border-radius: 2px; display: flex; }
.st { width: 65px; height: 48px; padding: 0 2px 0 2px; display: flex; flex-direction: column; align-items: center; }
.st.sel { box-shadow: 0 0 0 2px #dcdfe6 inset; }
.st b { display: block; width: 61px; overflow: hidden; height: 28px; padding-top: 3px; font: 700 20px/25px Lato, "Open Sans", sans-serif; color: #000; letter-spacing: -.1px; }
.st b.n { font: 400 10.500px/25px "Noto Sans", sans-serif; letter-spacing: .15px; padding-left: 1px; }
.st b.h1 { font-size: 27px; }
.st span { line-height: 17px; }
.gs { margin-left: auto; width: 15px; display: flex; flex-direction: column; border-left: 1px solid #e3e5e9; }
.gs > * { height: 4px; margin: 6px auto 6px 4px; }
.gs > span { border-top: 0; margin-top: 5px; }
.gs .bar { width: 6px; height: 1px; background: #6b788f; margin-bottom: 3px; }
.gs > .flip { background: #a3abba; }
.type { width: 121px; }
.type .big { padding-right: 1px; }
.sel2 { width: 120px; display: flex; padding-left: 1px; }
.fr { width: 66px; } .se { width: 44px; }
.sett { width: 73px; }
.sett .big { padding-right: 2px; }
.cut-s { width: 18px; padding: 34px 0 0 10px; line-height: 13px; overflow: hidden; }
.more { width: 13px; height: 64px; margin-top: 1px; background: #c9cbd2; display: flex; align-items: center; justify-content: center; }

/* document */
.work { height: 555px; display: flex; }
.docarea { width: 1061px; position: relative; }
.canvas { display: flex; height: 541px; }
.gutter { width: 26px; background: linear-gradient(90deg, #f5f6f9 40%, #e1e2e4); }
.sheet { width: 1021px; background: #fff; overflow: hidden; }
.sheet i { background: #000; }
.pt { width: 7px; height: 7px; border-radius: 50%; margin-left: 134px; }
.pt.a { margin-top: 210px; }
.caret { width: 2px; height: 19px; margin: 43px 0 0 167px; }
.pt.b { margin-top: 21px; }
.sheet p { margin: 43px 0 0 167px; font: 16.700px/20px "Liberation Sans", Arial, sans-serif; color: #6f8292; }
.pt.c { margin-top: 75px; }
.pt.d { margin-top: 82px; }
.vbar { width: 14px; background: #e8eaef; display: flex; flex-direction: column; align-items: center; }
.vtop { width: 14px; height: 17px; background: #f5f6f9; display: flex; align-items: center; justify-content: center; }
.up { margin-top: 5px; }
.thumb { width: 12px; height: 42px; border-radius: 6px; background: #d3d6de; margin-top: 148px; }
.vbtn { margin-top: 251px; display: flex; flex-direction: column; align-items: center; gap: 9px; }
.sq { width: 6px; height: 6px; border: 1px solid #7d8aa5; border-radius: 1px; margin: 1px 0 2px; }
.hbar { height: 14px; background: #e8eaef; display: flex; align-items: center; padding-left: 6px; }
.hbar i { width: 909px; height: 12px; border-radius: 6px; background: #d3d6de; margin: 0 103px 0 7px; }
.float { position: absolute; left: 260px; top: 291px; width: 310px; height: 55px; background: #fff; border: 1px solid #cbcdd1; box-shadow: 1px 1px 3px #0003; }
.f1, .f2 { display: grid; align-items: center; padding-left: 5px; }
.f1 { height: 26px; grid-template-columns: 27px 19px 13px 171px 24px 16px; }
.f1 .combo { width: 163px; border-radius: 0; }
.f1 .combo span:first-child { width: 87px; }
.f2 { height: 27px; grid-template-columns: 30px 31px 9px 25px 24px 27px 19px 14px 19px 11px 37px 20px 15px 18px; }
.f2 .hot { width: 33px; gap: 4px; }
.f2 .g { width: 16px; height: 16px; stroke: none; }

/* styles panel */
.panel { width: 261px; background: #f5f6f9; border-left: 1px solid #dfe1e6; padding: 0 12px; color: #3c4658; }
.ph { height: 30px; display: grid; grid-template-columns: 116px 89px 24px 16px; align-items: center; margin-left: -3px; white-space: nowrap; }
.cur { width: 236px; height: 32px; margin-top: 8px; border: 1px solid #d3d7de; border-radius: 2px; background: #fff; display: flex; align-items: center; justify-content: space-between; padding: 0 7px 0 6px; color: #000; }
.cur .dd { width: 8px; height: 5px; }
.btns { display: flex; gap: 10px; margin-top: 7px; }
.btns span { width: 78px; height: 23px; line-height: 22px; border: 1px solid #d3d7de; background: #fff; text-align: center; white-space: nowrap; }
.btns span + span { width: 81px; }
.panel h2 { margin: 21px 0 6px; font: 13px/19px "Noto Sans", sans-serif; color: #4a556b; white-space: nowrap; }
.list { width: 236px; height: 334px; border: 1px solid #d8dbe1; border-radius: 2px; background: #fff; overflow: hidden; display: flex; }
.list ul { list-style: none; margin: -4px 0 0; padding: 0 0 0 2px; width: 222px; flex: none; }
.list li { height: 34px; display: flex; align-items: center; justify-content: space-between; padding: 0 6px 0 4px; color: #000; }
.list li svg { width: 10px; height: 10px; margin-bottom: 7px; fill: none; stroke: #000; }
.list em { font: normal 11px/11px "Noto Sans", sans-serif; border-bottom: 1px solid #000; margin: 0 2px 8px 0; }
.list .h { font: 700 20px/24px Lato, "Open Sans", sans-serif; }
.list .h4 { font-size: 18px; letter-spacing: -.3px; }
.link u { font: 13px/16px "Liberation Serif", serif; color: #00f; padding-top: 2px; }
.list .cursel { border: 1px solid #4a90e8; height: 33px; margin: 0 0 1px; padding: 0 5px 0 3px; width: 220px; }
.list .web { font: 16px/20px "Liberation Serif", serif; letter-spacing: .1px; padding-top: 2px; }
.list .strong { font: 700 13px/16px "Liberation Serif", serif; padding-top: 2px; }
.lthumb { width: 8px; height: 220px; border-radius: 4px; background: #e7e8ea; margin: 101px 0 0 3px; }
.show { display: flex; align-items: center; margin-top: 7px; height: 20px; }
.show span { width: 38px; }
.show div { width: 197px; height: 20px; border: 1px solid #d3d7de; background: #fff; display: flex; align-items: center; justify-content: space-between; padding: 0 5px 0 3px; }
.prev { display: flex; gap: 5px; align-items: center; margin-top: 9px; }
.side { width: 44px; background: #f5f6f9; border-left: 1px solid #dfe1e6; display: flex; flex-direction: column; align-items: center; gap: 4px; padding-right: 2px; }
.grip { width: 20px; height: 4px; border: solid #cfd2d8; border-width: 1px 0; margin: 10px 0 9px; }
.side div { width: 32px; height: 32px; display: flex; align-items: center; justify-content: center; border-radius: 2px; }
.side .on { background: #dbdfe7; }
.side .dim .i { stroke: #727a88; }
.side footer { margin-top: 160px; width: 38px; border-top: 1px solid #dfe1e6; padding: 16px 0 0 11px; }
.side footer .i { stroke: #b0b4bb; }

/* status bar */
.status { height: 29px; background: #f5f6f9; border-top: 1px solid #e1e3e8; display: grid; align-items: center; white-space: nowrap;
  grid-template-columns: 10px 58px 10px 80px 91px 595px 26px 27px 12px 31px 25px 26px 24px 20px 19px 15px 23px 32px 17px 22px 150px 23px 16px; }
.status > span { letter-spacing: -.05px; }
.status .vs { height: 14px; }
.spell { width: 91px; height: 24px; background: #d8dde5; display: flex; align-items: center; gap: 3px; padding-left: 9px; padding-top: 0; }
.spell span { letter-spacing: -.03px; padding-top: 1px; }
.sarr { width: 17px; height: 24px; background: #e1e5ea; display: flex; align-items: center; justify-content: center; padding-right: 3px; }
.status .hot { width: 23px; }
.zoomv { color: #4a556b; }
.sl { fill: none; }

/* taskbar */
.task { height: 48px; background: linear-gradient(90deg, #1f2b35 0, #1f2b35 210px, #13264c 270px, #11235a 400px, #112153 900px, #172850 1010px, #1d2a36 1110px, #1d2b37 100%); display: grid; align-items: center; padding-left: 20px; color: #fff;
  grid-template-columns: 26px 428px 45px 43px 44px 44px 44px 44px 43px 44px 37px 262px 32px 32px 23px 26px 26px 60px 21px; }
.task > svg:nth-child(7) { margin-bottom: 6px; }
.task > svg:first-child { margin-bottom: 3px; }
.wx, .clk { display: flex; flex-direction: column; line-height: 16px; font-size: 11px; }
.wx b { font-weight: 500; }
.wx span { color: #c3c8cd; }
.clk { align-items: flex-end; white-space: nowrap; letter-spacing: .15px; }
.wx { margin-top: 1px; }
.wps { width: 40px; height: 40px; background: #20315c; border: 1px solid #2a3b66; border-radius: 4px; }
.wps svg { margin: -1px; }
.wi { width: 16px; height: 16px; fill: none; stroke: #fff; stroke-width: 1.200; }
.cnt { width: 20px; height: 16px; margin-left: 5px; border-radius: 8px; background: #4cc2ff; color: #10202c; text-align: center; line-height: 16px; font-size: 10.500px; }
```
